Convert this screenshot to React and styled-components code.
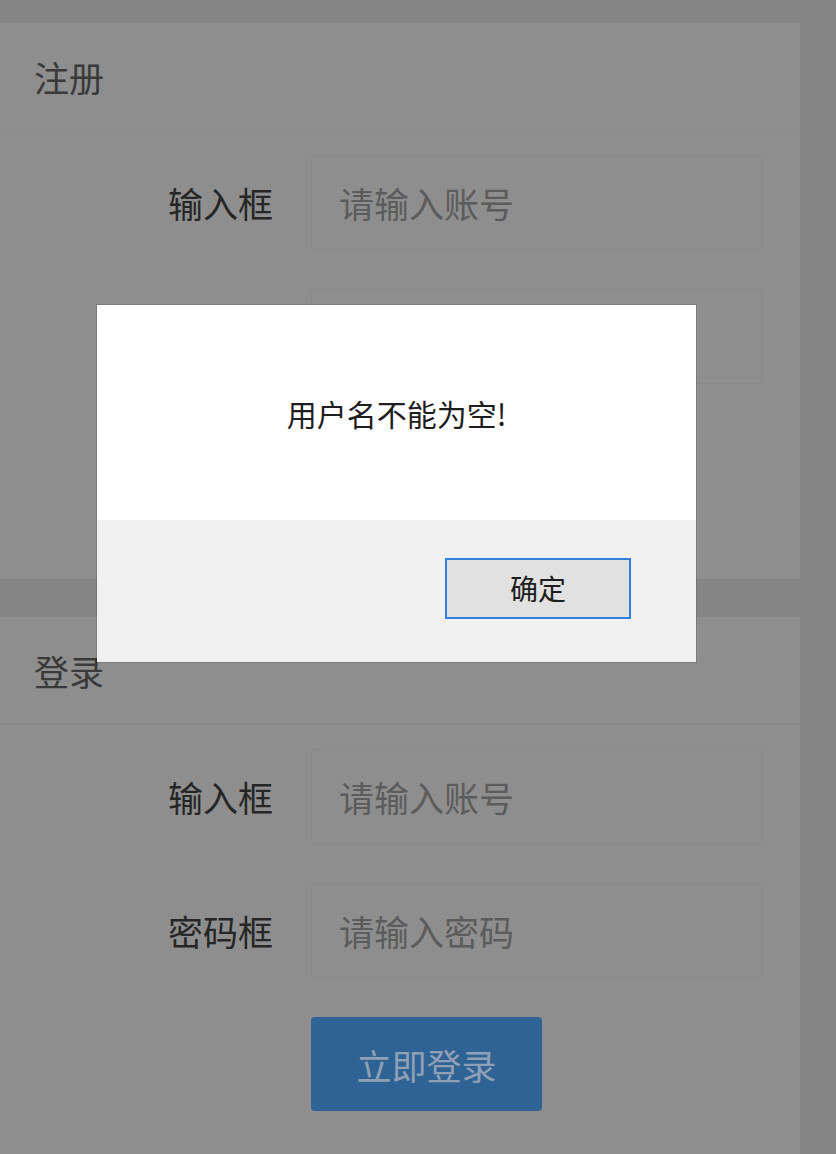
import styled, { createGlobalStyle } from 'styled-components';

const GlobalStyle = createGlobalStyle`
    body {
        margin: 0;
        background: #858585;
        font-family: "Noto Sans CJK SC", "Noto Sans", sans-serif;
    }
`;

const forms = [
    {
        title: '注册',
        submit: '立即注册',
        fields: [
            { label: '输入框', placeholder: '请输入账号', type: 'text' },
            { label: '密码框', placeholder: '请输入密码', type: 'password' },
        ],
    },
    {
        title: '登录',
        submit: '立即登录',
        fields: [
            { label: '输入框', placeholder: '请输入账号', type: 'text' },
            { label: '密码框', placeholder: '请输入密码', type: 'password' },
        ],
    },
];

export default function App() {
    return (
        <>
            <GlobalStyle />
            <Page>
                {forms.map(form => (
                    <Card key={form.title}>
                        <CardHeader>{form.title}</CardHeader>
                        <CardBody>
                            {form.fields.map(field => (
                                <FormRow key={field.label}>
                                    <Label>{field.label}</Label>
                                    <Input type={field.type} placeholder={field.placeholder} />
                                </FormRow>
                            ))}
                            <FormRow>
                                <span />
                                <SubmitButton>{form.submit}</SubmitButton>
                            </FormRow>
                        </CardBody>
                    </Card>
                ))}
            </Page>
            <Dialog>
                <DialogBody>用户名不能为空!</DialogBody>
                <DialogFooter>
                    <OkButton>确定</OkButton>
                </DialogFooter>
            </Dialog>
        </>
    );
}

const Page = styled.div`
    width: 800px;
    padding-top: 23px;
    display: flex;
    flex-direction: column;
    gap: 38px;
`;

const Card = styled.section`
    background: #8e8e8e;
`;

const CardHeader = styled.header`
    height: 106px;
    padding-left: 34px;
    display: flex;
    align-items: center;
    border-bottom: 1px solid #888888;
    color: #3a3a3a;
    font-size: 35px;
`;

const CardBody = styled.div`
    padding: 25px 37px 62px 0;
    display: flex;
    flex-direction: column;
    gap: 39px;
`;

const FormRow = styled.div`
    display: grid;
    grid-template-columns: 273px 452px;
    column-gap: 38px;
    align-items: center;
`;

const Label = styled.label`
    text-align: right;
    color: #262626;
    font-size: 35px;
`;

const Input = styled.input`
    box-sizing: border-box;
    height: 95px;
    padding: 0 0 0 27px;
    border: 1px solid #898989;
    border-radius: 3px;
    background: transparent;
    font-family: inherit;
    font-size: 35px;
    color: #262626;
    outline: none;

    &::placeholder {
        color: #5c5c5c;
    }
`;

const SubmitButton = styled.button`
    justify-self: start;
    width: 231px;
    height: 94px;
    border: none;
    border-radius: 4px;
    background: #2f6396;
    color: #8fa0b4;
    font-family: inherit;
    font-size: 35px;
`;

const Dialog = styled.div`
    position: fixed;
    left: 97px;
    top: 305px;
    width: 599px;
    display: flex;
    flex-direction: column;
    box-shadow: 0 0 0 1px rgba(0, 0, 0, 0.12);
`;

const DialogBody = styled.div`
    height: 215px;
    display: flex;
    align-items: center;
    justify-content: center;
    background: #ffffff;
    color: #1e1e1e;
    font-size: 30px;
`;

const DialogFooter = styled.div`
    height: 142px;
    padding-right: 65px;
    display: flex;
    align-items: center;
    justify-content: flex-end;
    background: #f0f0f0;
`;

const OkButton = styled.button`
    box-sizing: border-box;
    width: 186px;
    height: 61px;
    margin-top: -6px;
    border: 2px solid #3380dc;
    background: #e1e1e1;
    color: #1e1e1e;
    font-family: inherit;
    font-size: 28px;
`;
